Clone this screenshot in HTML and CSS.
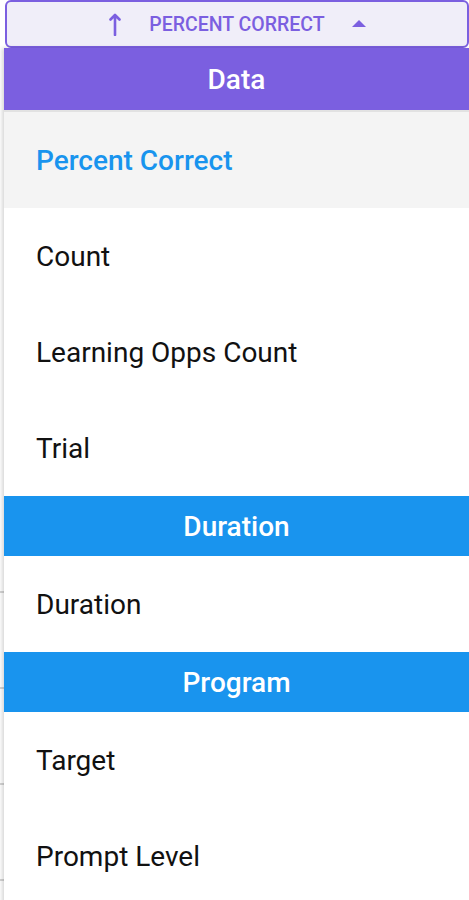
FILE: index.html
```html
<!DOCTYPE html>
<html lang="en">
<head>
<meta charset="utf-8">
<title>Sort menu</title>
<link rel="stylesheet" href="styles.css">
</head>
<body>
<div class="page">
  <button class="sort-button" type="button">
    <svg class="sort-arrow" width="14" height="24" viewBox="0 0 14 24" aria-hidden="true">
      <path d="M7 23V3M2.5 7.5L7 3l4.5 4.5" fill="none" stroke="#7b5fe0" stroke-width="2.6" stroke-linecap="round" stroke-linejoin="round"/>
    </svg>
    <span class="sort-label">Percent Correct</span>
    <svg class="sort-caret" width="14" height="7" viewBox="0 0 14 7" aria-hidden="true">
      <path d="M0 7L7 0l7 7z" fill="#7b5fe0"/>
    </svg>
  </button>
  <div class="menu">
    <div class="group-header group-purple">Data</div>
    <div class="menu-item selected">Percent Correct</div>
    <div class="menu-item">Count</div>
    <div class="menu-item">Learning Opps Count</div>
    <div class="menu-item">Trial</div>
    <div class="group-header group-blue">Duration</div>
    <div class="menu-item">Duration</div>
    <div class="group-header group-blue">Program</div>
    <div class="menu-item">Target</div>
    <div class="menu-item">Prompt Level</div>
  </div>
</div>
</body>
</html>
```

FILE: styles.css
```css
html, body {
  margin: 0;
  padding: 0;
  background: #ffffff;
  font-family: Roboto, "Noto Sans", "Liberation Sans", sans-serif;
  overflow: hidden;
}

.page {
  width: 469px;
  height: 900px;
  overflow: hidden;
  background-color: #ffffff;
  background-image:
    linear-gradient(#d4d4d4, #d4d4d4),
    linear-gradient(#d4d4d4, #d4d4d4),
    linear-gradient(#d4d4d4, #d4d4d4),
    linear-gradient(#d4d4d4, #d4d4d4);
  background-repeat: no-repeat;
  background-size: 100% 2px;
  background-position: 0 591px, 0 687px, 0 783px, 0 879px;
}

.sort-button {
  display: flex;
  align-items: center;
  justify-content: center;
  box-sizing: border-box;
  width: 464px;
  height: 48px;
  margin: 0 0 0 5px;
  padding: 1px 0 0 0;
  border: 2px solid #7b5fe0;
  border-radius: 6px;
  background: #f0eef9;
  font-family: Roboto, "Noto Sans", sans-serif;
  cursor: pointer;
}

.sort-arrow {
  margin-right: 27px;
  margin-top: -1px;
}

.sort-label {
  color: #7b5fe0;
  font-size: 19.5px;
  font-weight: 500;
  text-transform: uppercase;
}

.sort-caret {
  margin-left: 27px;
  margin-top: -2px;
}

.menu {
  margin-left: 4px;
  background: #ffffff;
  box-shadow: -2px 0 4px rgba(0, 0, 0, 0.16);
  position: relative;
  z-index: 1;
}

.group-header {
  display: flex;
  align-items: center;
  justify-content: center;
  box-sizing: border-box;
  color: #ffffff;
  font-size: 28px;
  font-weight: 500;
}

.group-purple {
  height: 64px;
  background: #7b5fe0;
  border-bottom: 2px solid #e2e2e2;
}

.group-blue {
  height: 60px;
  background: #1994ee;
}

.menu-item {
  height: 96px;
  display: flex;
  align-items: center;
  padding-left: 32px;
  font-size: 28px;
  color: #111111;
}

.menu-item.selected {
  background: #f4f4f4;
  color: #1994ee;
  font-weight: 500;
}
```
